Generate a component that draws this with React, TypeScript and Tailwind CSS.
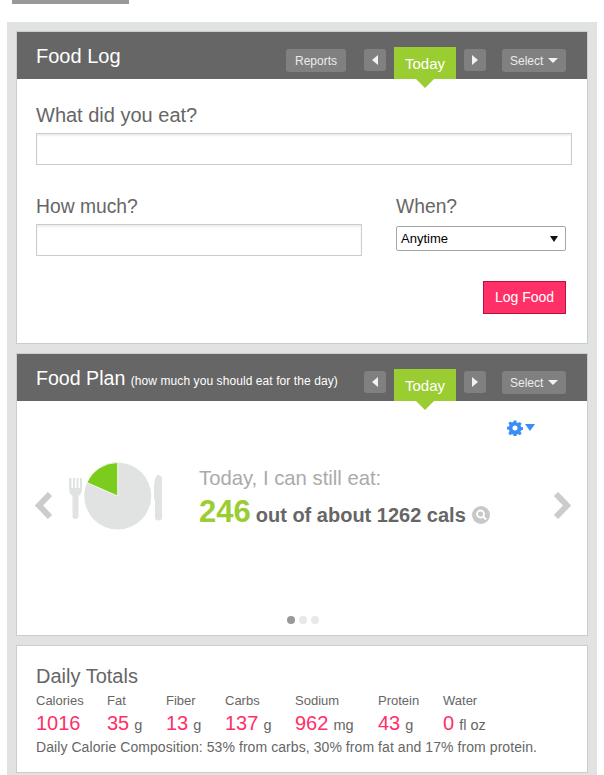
import React from "react";

function Caret({ dir }: { dir: "left" | "right" }) {
  return (
    <svg width="7" height="10" viewBox="0 0 7 10" className="block">
      <path d={dir === "left" ? "M6 0v10L0 5z" : "M0 0v10l6-5z"} fill="#f2f2f2" />
    </svg>
  );
}

function DateNav() {
  return (
    <div className="flex items-end">
      <button className="w-[22px] h-[22px] mb-[8px] rounded-[3px] bg-[#808080] flex items-center justify-center">
        <Caret dir="left" />
      </button>
      <div className="relative w-[62px] h-[32px] mx-2 bg-[#9acd32] text-white text-[15px] leading-[33px] text-center">
        Today
        <svg width="18" height="9" viewBox="0 0 18 9" className="absolute left-[22px] top-[32px]">
          <path d="M0 0h18L9 9z" fill="#9acd32" />
        </svg>
      </div>
      <button className="w-[22px] h-[22px] mb-[8px] rounded-[3px] bg-[#808080] flex items-center justify-center">
        <Caret dir="right" />
      </button>
    </div>
  );
}

function SelectBtn() {
  return (
    <button className="w-[64px] h-[23px] mb-[7px] rounded-[3px] bg-[#808080] text-[#ececec] text-[12px] flex items-center pl-2 gap-[5px]">
      Select
      <svg width="10" height="5" viewBox="0 0 10 5">
        <path d="M0 0h10L5 5z" fill="#f2f2f2" />
      </svg>
    </button>
  );
}

function Plate() {
  return (
    <svg width="96" height="72" viewBox="0 0 96 72" className="block">
      <path d="M1 16h2.500v10h1.500V16h2v10h1.500V16h2v10h1.500V16H14v11c0 4-2 6-3.500 7v20a3 3 0 0 1-6 0V34C3 33 1 31 1 27z" fill="#e1e3e3" />
      <circle cx="49.700" cy="34" r="33.500" fill="#e1e3e3" />
      <path d="M49.700 34V.5A33.500 33.500 0 0 0 19 20.600z" fill="#7ccc1e" stroke="#fff" strokeWidth="0.800" />
      <path d="M90 13c-2 0-4 5-4 14v8c0 2 1 3 1 4v16a3.500 3.500 0 0 0 7 0V17c0-3-2-4-4-4z" fill="#e1e3e3" />
    </svg>
  );
}

const totals = [
  { label: "Calories", value: "1016", unit: "", w: "w-[71px]" },
  { label: "Fat", value: "35", unit: "g", w: "w-[59px]" },
  { label: "Fiber", value: "13", unit: "g", w: "w-[59px]" },
  { label: "Carbs", value: "137", unit: "g", w: "w-[70px]" },
  { label: "Sodium", value: "962", unit: "mg", w: "w-[83px]" },
  { label: "Protein", value: "43", unit: "g", w: "w-[65px]" },
  { label: "Water", value: "0", unit: "fl oz", w: "w-[70px]" },
];

export default function App() {
  return (
    <div className="w-[604px] h-[775px] overflow-hidden bg-white font-['Liberation_Sans',Arial,sans-serif] text-[#666]">
      <div className="w-[117px] h-1 ml-3 bg-[#999]" />
      <div className="w-[590px] h-[757px] ml-[7px] mt-[18px] bg-[#e1e3e3] px-[9px] pt-[9px] flex flex-col gap-[9px]">
        {/* Food Log */}
        <section className="h-[313px] border border-[#ccc] bg-white">
          <header className="h-[47px] bg-[#666] flex pl-[19px] pr-[21px] justify-between">
            <h2 className="text-[20px] leading-[49px] text-white">Food Log</h2>
            <div className="flex items-end">
              <button className="w-[60px] h-[23px] mb-[7px] mr-[18px] rounded-[3px] bg-[#808080] text-[#ececec] text-[12px]">
                Reports
              </button>
              <DateNav />
              <div className="ml-4"><SelectBtn /></div>
            </div>
          </header>
          <div className="pl-[19px] pr-[15px] pt-[25px]">
            <label className="block text-[20px] leading-[23px] text-[#666]">What did you eat?</label>
            <div className="h-[32px] mt-[6px] border border-[#ccc] shadow-[inset_0_2px_2px_#eee]" />
            <div className="flex mt-[30px]">
              <div className="w-[326px]">
                <label className="block text-[19.300px] leading-[23px]">How much?</label>
                <div className="h-[32px] mt-[6px] border border-[#ccc] shadow-[inset_0_2px_2px_#eee]" />
              </div>
              <div className="ml-[34px] w-[170px]">
                <label className="block text-[19.300px] leading-[23px]">When?</label>
                <div className="h-[25px] mt-[8px] border border-[#a6a6a6] rounded-[2px] flex items-center justify-between pl-1 pr-[7px] pt-px text-[13px] text-black">
                  Anytime
                  <svg width="8" height="6" viewBox="0 0 8 6"><path d="M0 0h8L4 6z" fill="#111" /></svg>
                </div>
              </div>
            </div>
            <div className="flex justify-end mt-[25px] mr-[6px]">
              <button className="w-[83px] h-[33px] bg-[#ff2f67] border border-[#b80f3e] text-white text-[14px]">Log Food</button>
            </div>
          </div>
        </section>

        {/* Food Plan */}
        <section className="h-[283px] border border-[#ccc] bg-white flex flex-col">
          <header className="h-[47px] shrink-0 bg-[#666] flex pl-[19px] pr-[21px] justify-between">
            <h2 className="text-[19.600px] leading-[49px] text-white whitespace-nowrap">
              Food Plan <span className="text-[12px] tracking-[0.08px]">(how much you should eat for the day)</span>
            </h2>
            <div className="flex items-end">
              <DateNav />
              <div className="ml-4"><SelectBtn /></div>
            </div>
          </header>
          <div className="h-[35px] flex justify-end items-end pr-[52px] gap-[2px]">
            <svg width="16" height="16" viewBox="0 0 16 16">
              <path fill="#3b8ef3" fillRule="evenodd" d="M6.700.500h2.600l.4 2 1.300.6 1.800-1.100 1.800 1.800-1.100 1.800.6 1.300 2 .4v2.600l-2 .4-.6 1.300 1.100 1.800-1.800 1.800-1.800-1.100-1.300.6-.4 2H6.700l-.4-2-1.300-.6-1.800 1.100-1.800-1.800L2.500 11.100 1.900 9.800l-2-.4V6.800l2-.4.6-1.300-1.100-1.800 1.800-1.800L5 2.600l1.300-.6zM8 5.500a2.500 2.500 0 1 0 0 5 2.500 2.500 0 0 0 0-5z" />
            </svg>
            <svg width="10" height="7" viewBox="0 0 10 7" className="mb-[5px]"><path d="M0 0h10L5 7z" fill="#3b8ef3" /></svg>
          </div>
          <div className="flex items-start mt-[26px] pl-[18px] pr-[16px]">
            <svg width="18" height="27" viewBox="0 0 18 27" className="shrink-0 mt-[30px]">
              <path d="M15 2 4 13.500 15 25" fill="none" stroke="#ccc" strokeWidth="6" />
            </svg>
            <div className="ml-[15px]"><Plate /></div>
            <div className="ml-[35px] flex-1 mt-[5px]">
              <div className="text-[20.300px] leading-[23px] text-[#aaa]">Today, I can still eat:</div>
              <div className="flex items-baseline mt-[4px] text-[#666] font-bold">
                <span className="text-[31px] leading-[35px] text-[#9acd32]">246</span>
                <span className="ml-[5px] text-[20px]">out of about 1262 cals</span>
                <svg width="18" height="18" viewBox="0 0 18 18" className="ml-[6px] self-center mt-[6px]">
                  <circle cx="9" cy="9" r="9" fill="#c8c8c8" />
                  <circle cx="8.500" cy="8" r="3.500" fill="none" stroke="#fff" strokeWidth="1.800" />
                  <path d="M11 10.500l3 3" stroke="#fff" strokeWidth="2" />
                </svg>
              </div>
            </div>
            <svg width="18" height="27" viewBox="0 0 18 27" className="shrink-0 mt-[30px]">
              <path d="M3 2l11 11.500L3 25" fill="none" stroke="#ccc" strokeWidth="6" />
            </svg>
          </div>
          <div className="flex justify-center gap-1 mt-auto mb-[11px] pl-px">
            <span className="w-2 h-2 rounded-full bg-[#999]" />
            <span className="w-2 h-2 rounded-full bg-[#e8e8e8]" />
            <span className="w-2 h-2 rounded-full bg-[#e8e8e8]" />
          </div>
        </section>

        {/* Daily Totals */}
        <section className="h-[128px] border border-[#ccc] bg-white pl-[19px] pt-[19px]">
          <h2 className="text-[20px] leading-[23px]">Daily Totals</h2>
          <div className="flex mt-[6px]">
            {totals.map((t) => (
              <div key={t.label} className={t.w}>
                <div className="text-[13px] leading-[14px]">{t.label}</div>
                <div className="mt-[3px] leading-[24px] whitespace-nowrap">
                  <span className="text-[20px] text-[#ff2f67]">{t.value}</span>
                  {t.unit && <span className="ml-[5px] text-[14.500px]">{t.unit}</span>}
                </div>
              </div>
            ))}
          </div>
          <p className="mt-[2px] text-[14px] tracking-[0.07px] leading-[16px] whitespace-nowrap">Daily Calorie Composition: 53% from carbs, 30% from fat and 17% from protein.</p>
        </section>
      </div>
    </div>
  );
}
